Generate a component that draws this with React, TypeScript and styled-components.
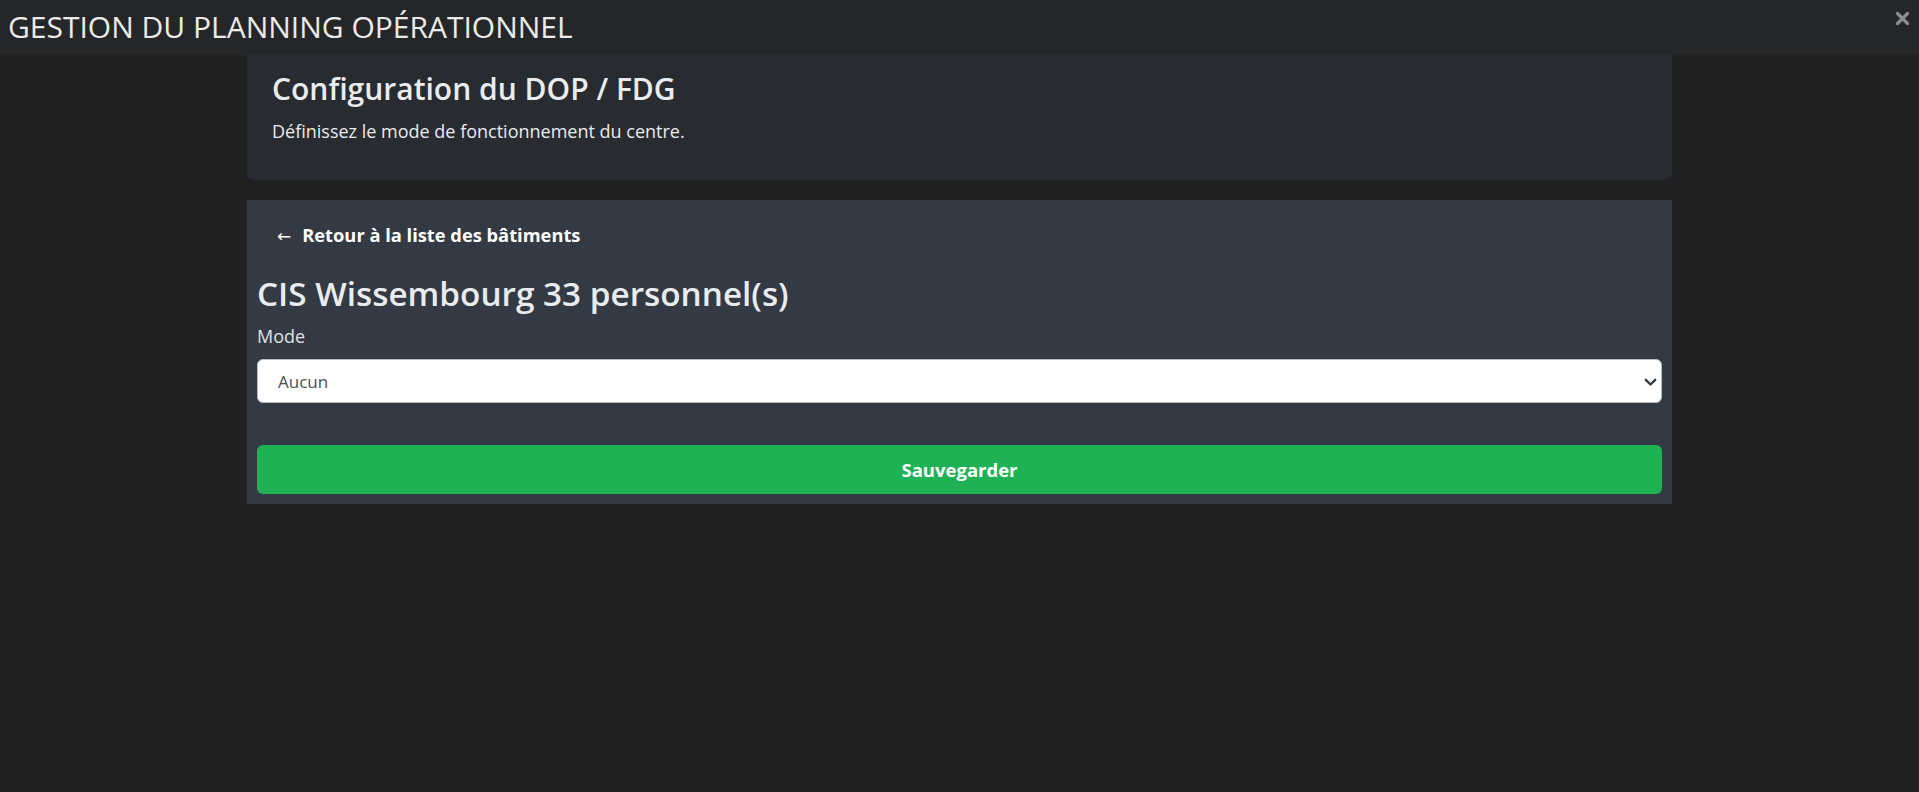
import React from "react";
import styled, { createGlobalStyle } from "styled-components";

const Global = createGlobalStyle`
  html, body { margin: 0; padding: 0; background: #212121; }
  body { font-family: "Open Sans", "Noto Sans", sans-serif; color: #dee2e6; }
  * { box-sizing: border-box; }
`;

const Page = styled.div`
  min-height: 792px;
  background: #212121;
`;

const TopBar = styled.header`
  height: 55px;
  background: #252628;
  display: flex;
  align-items: center;
  justify-content: space-between;
  padding: 0 8px 0 8px;
`;

const TopTitle = styled.h1`
  margin: 0 0 2px;
  font-size: 30px;
  font-weight: 400;
  color: #ebebeb;
  line-height: 30px;
`;

const CloseBtn = styled.button`
  align-self: flex-start;
  margin-top: 11px;
  background: none;
  border: 0;
  padding: 0;
  width: 16px;
  height: 16px;
  cursor: pointer;
  display: flex;
`;

const Main = styled.main`
  width: 1425px;
  margin: 0 auto;
  display: flex;
  flex-direction: column;
  gap: 20px;
`;

const IntroCard = styled.section`
  background: #282b2f;
  border-radius: 0 0 7px 7px;
  height: 125px;
  padding: 16px 25px 0;
`;

const IntroTitle = styled.h3`
  margin: 0;
  font-size: 30px;
  font-weight: 600;
  color: #e9ecef;
  line-height: 36px;
`;

const IntroText = styled.p`
  margin: 12px 0 0;
  font-size: 18px;
  color: #e9ecef;
  line-height: 24px;
`;

const FormCard = styled.section`
  background: #343a43;
  padding: 10px;
  display: flex;
  flex-direction: column;
`;

const BackLink = styled.button`
  align-self: flex-start;
  background: none;
  border: 0;
  margin-top: 12px;
  padding: 0 16px 6px 20px;
  font-family: inherit;
  font-size: 18.3px;
  font-weight: 700;
  color: #ffffff;
  line-height: 26px;
  cursor: pointer;
  display: flex;
  align-items: baseline;
`;

const Arrow = styled.span`
  font-family: "DejaVu Sans", sans-serif;
  font-weight: 400;
  font-size: 17px;
  margin-right: 11px;
`;

const BuildingTitle = styled.h2`
  margin: 18px 0 0;
  font-size: 33.3px;
  font-weight: 600;
  color: #e9ecef;
  line-height: 40px;
`;

const Label = styled.label`
  margin-top: 11px;
  font-size: 18px;
  line-height: 24px;
  color: #dee2e6;
`;

const SelectWrap = styled.div`
  position: relative;
  margin-top: 11px;
`;

const Select = styled.select`
  width: 100%;
  height: 44px;
  appearance: none;
  background: #ffffff;
  border: 1px solid #b9bec4;
  border-radius: 6px;
  padding: 0 40px 0 20px;
  font-family: inherit;
  font-size: 17px;
  color: #495057;
  outline: none;
`;

const Chevron = styled.svg`
  position: absolute;
  right: 5px;
  top: 19px;
  pointer-events: none;
`;

const SaveButton = styled.button`
  margin-top: 42px;
  height: 49px;
  width: 100%;
  background: #1eb254;
  border: 0;
  border-radius: 6px;
  color: #ffffff;
  font-family: inherit;
  font-size: 18.5px;
  font-weight: 700;
  cursor: pointer;
`;

export default function App() {
  return (
    <Page>
      <Global />
      <TopBar>
        <TopTitle>GESTION DU PLANNING OPÉRATIONNEL</TopTitle>
        <CloseBtn aria-label="Fermer">
          <svg width="15" height="15" viewBox="0 0 15 15">
            <path d="M2.5 2.5 L12.5 12.5 M12.5 2.5 L2.5 12.5" stroke="#8c8c8c" strokeWidth="3.2" strokeLinecap="round" />
          </svg>
        </CloseBtn>
      </TopBar>
      <Main>
        <IntroCard>
          <IntroTitle>Configuration du DOP / FDG</IntroTitle>
          <IntroText>Définissez le mode de fonctionnement du centre.</IntroText>
        </IntroCard>
        <FormCard>
          <BackLink>
            <Arrow>←</Arrow>Retour à la liste des bâtiments
          </BackLink>
          <BuildingTitle>CIS Wissembourg 33 personnel(s)</BuildingTitle>
          <Label htmlFor="mode">Mode</Label>
          <SelectWrap>
            <Select id="mode" defaultValue="aucun">
              <option value="aucun">Aucun</option>
              <option value="dop">DOP</option>
              <option value="fdg">FDG</option>
            </Select>
            <Chevron width="13" height="9" viewBox="0 0 13 9">
              <path d="M1.8 1.8 L6.5 6.5 L11.2 1.8" fill="none" stroke="#343a40" strokeWidth="2.4" strokeLinecap="round" strokeLinejoin="round" />
            </Chevron>
          </SelectWrap>
          <SaveButton>Sauvegarder</SaveButton>
        </FormCard>
      </Main>
    </Page>
  );
}
